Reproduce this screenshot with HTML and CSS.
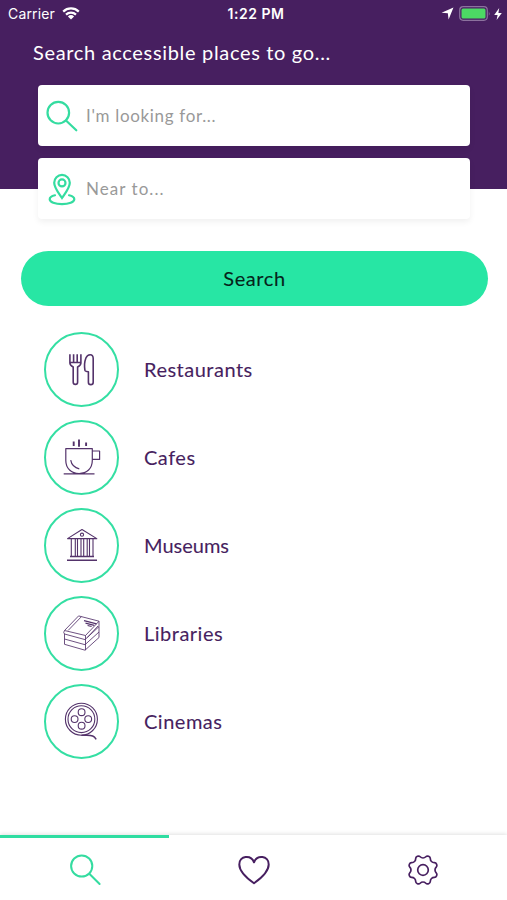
FILE: index.html
```html
<!DOCTYPE html>
<html lang="en">
<head>
    <meta charset="UTF-8">
    <meta name="viewport" content="width=device-width, initial-scale=1.0">
    <title>Accessible places</title>
    <link rel="stylesheet" href="styles.css">
</head>
<body>
    <div class="app">
        <header class="header">
            <div class="status-bar">
                <div class="status-left">
                    <span class="carrier">Carrier</span>
                    <svg width="18" height="13" viewBox="0 0 18 13">
                        <path d="M1.2 4.6a11.2 11.2 0 0 1 15.6 0M4 7.6a7.2 7.2 0 0 1 10 0" fill="none" stroke="#fff" stroke-width="2.2"/>
                        <path d="M9 12.6L5.9 9.5a4.5 4.5 0 0 1 6.2 0z" fill="#fff"/>
                    </svg>
                </div>
                <span class="time">1:22 PM</span>
                <div class="status-right">
                    <svg width="13" height="13" viewBox="0 0 12 12"><path d="M11.5 0.5L7 11.5L6.3 5.8L0.5 5.2z" fill="#fff"/></svg>
                    <svg width="32" height="15" viewBox="0 0 32 15">
                        <rect x="0.7" y="0.7" width="27.6" height="13.6" rx="3.5" fill="none" stroke="#8c729e" stroke-width="1.2"/>
                        <rect x="2.5" y="2.5" width="24" height="10" rx="1.5" fill="#4cd964"/>
                        <path d="M29.8 5.2q1.6 2.3 0 4.6z" fill="#8c729e"/>
                    </svg>
                    <svg width="8" height="12" viewBox="0 0 8 12"><path d="M5.2 0L0.2 7H3.6L2.6 12L7.8 4.9H4.4z" fill="#fff"/></svg>
                </div>
            </div>
            <h1 class="title">Search accessible places to go...</h1>
        </header>

        <form class="search-form">
            <label class="field">
                <svg class="field-icon" width="34" height="34" viewBox="0 0 34 34">
                    <circle cx="13.3" cy="13.7" r="10.8"/>
                    <path d="M21 21.5L31.3 31.3"/>
                </svg>
                <input type="text" placeholder="I'm looking for...">
            </label>
            <label class="field">
                <svg class="field-icon" width="34" height="34" viewBox="0 0 34 34">
                    <path d="M17 26C14.5 22 9.2 16 9.2 10.7a7.8 7.8 0 0 1 15.6 0C24.8 16 19.5 22 17 26z"/>
                    <circle cx="17" cy="10.9" r="3.5"/>
                    <path d="M10 23.3C6.5 24.1 4.7 25.5 4.7 27.2c0 2.9 5.5 4.9 12.3 4.9s12.3-2 12.3-4.9c0-1.7-1.8-3.1-5.3-3.9"/>
                </svg>
                <input class="near" type="text" placeholder="Near to...">
            </label>
            <button class="search-button" type="button">Search</button>
        </form>

        <ul class="categories">
            <li class="category">
                <span class="circle">
                    <svg viewBox="2 2 71 71" stroke-width="1.6">
                        <path d="M25.9 22.3V31q0 2.3 3.3 4V50.2a2.2 2.2 0 0 0 4.4 0V35q3.3-1.7 3.3-4V22.3M29.6 22.3v8.2M33.2 22.3v8.2M26 30.5h10.8"/>
                        <path d="M49.2 50.2V26.5c0-5-5.5-5-7.3-.5-1.4 3.6-1.5 9-1 12.2q.3 1.5 3.5 1.5V50.2a2.4 2.4 0 0 0 4.8 0z"/>
                    </svg>
                </span>
                <span class="name">Restaurants</span>
            </li>
            <li class="category">
                <span class="circle">
                    <svg viewBox="2 2 71 71" stroke-width="1.2">
                        <path d="M21.8 28.6H48.3V40.5c0 8-5.5 13-13.2 13s-13.3-5-13.3-13zM48.3 31h7.3v8.4h-7.3M19.7 53.9h30.8M26.7 40.2q1.3 7.1 8.6 8.6"/>
                        <path d="M29.7 21.5V26M35 19.5v7.3M42.1 22.5V26" stroke-width="1.9"/>
                    </svg>
                </span>
                <span class="name">Cafes</span>
            </li>
            <li class="category">
                <span class="circle">
                    <svg viewBox="2 2 71 71" stroke-width="1.1">
                        <path d="M23.5 30.6L38 21.5l14.8 9.1zM27.3 31v17.2M31.3 31v17.2M33.5 31v17.2M37 31v17.2M39.7 31v17.2M43.2 31v17.2M45.5 31v17.2M49 31v17.2"/>
                        <path d="M26 48.5h24M23 52.3h30" stroke-width="1.6"/>
                        <circle cx="38" cy="26.7" r="1.6"/>
                    </svg>
                </span>
                <span class="name museums">Museums</span>
            </li>
            <li class="category">
                <span class="circle">
                    <svg viewBox="2 2 71 71" stroke-width="0.85">
                        <path d="M20.5 34.5L34.6 19.9 55 25.2 41.5 39.5zM24.2 34.4L37.4 20.7M20.5 34.5q-1.5 2 0 3.5L41 43.6 55 30.6v-5.4M41.5 39.5V54.2M20.5 38v5L41 48.7 55 36v-5.4M20.5 43v5.3L41 54.2 55 41.5V36M43.2 41.6L54 30"/>
                        <path d="M40 24.7l12.6 3.1M41.5 27.1l8.8 2.2M43.6 29.5l4 1" stroke-width="1.2"/>
                    </svg>
                </span>
                <span class="name">Libraries</span>
            </li>
            <li class="category">
                <span class="circle">
                    <svg viewBox="2 2 71 71" stroke-width="1.1">
                        <circle cx="37.4" cy="35.2" r="16"/>
                        <circle cx="37.4" cy="35.2" r="13.4"/>
                        <circle cx="37.6" cy="28.2" r="3.4"/>
                        <circle cx="37.6" cy="41.7" r="3.4"/>
                        <circle cx="30.6" cy="35.1" r="3.4"/>
                        <circle cx="44.2" cy="35.1" r="3.4"/>
                        <path d="M37.4 51.2c5 .3 8.5-.4 11.3.8 1.8.8 2.5 1.8 3.5 3.3" stroke-width="1.5"/>
                    </svg>
                </span>
                <span class="name">Cinemas</span>
            </li>
        </ul>

        <nav class="tab-bar">
            <a class="tab active">
                <svg width="34" height="34" viewBox="0 0 34 34">
                    <circle cx="13.7" cy="13" r="10.6"/>
                    <path d="M21.3 20.7L31.6 31"/>
                </svg>
            </a>
            <a class="tab">
                <svg width="34" height="34" viewBox="0 0 34 34">
                    <path d="M17 30.3C10 25.3 2.3 18.7 2.3 11.5 2.3 2.5 14 1.5 17 9.3 20 1.5 31.7 2.5 31.7 11.5 31.7 18.7 24 25.3 17 30.3z"/>
                </svg>
            </a>
            <a class="tab settings">
                <svg width="34" height="34" viewBox="-17 -17 34 34">
                    <path d="M0-12C3.5-12 2.43-15.01 5.66-13.67 8.89-12.33 6.01-10.97 8.49-8.49 10.97-6.01 12.33-8.89 13.67-5.66 15.01-2.43 12-3.5 12 0 12 3.5 15.01 2.43 13.67 5.66 12.33 8.89 10.97 6.01 8.49 8.49 6.01 10.97 8.89 12.33 5.66 13.67 2.43 15.01 3.5 12 0 12-3.5 12-2.43 15.01-5.66 13.67-8.89 12.33-6.01 10.97-8.49 8.49-10.97 6.01-12.33 8.89-13.67 5.66-15.01 2.43-12 3.5-12 0-12-3.5-15.01-2.43-13.67-5.66-12.33-8.89-10.97-6.01-8.49-8.49-6.01-10.97-8.89-12.33-5.66-13.67-2.43-15.01-3.5-12 0-12z"/>
                    <circle cx="0" cy="0" r="5.3"/>
                </svg>
            </a>
        </nav>
    </div>
</body>
</html>
```
FILE: styles.css
```css
* {
    box-sizing: border-box;
}
body {
    margin: 0;
    font-family: Lato, "Liberation Sans", sans-serif;
    background-color: #fff;
    color: #471f60;
}
.app {
    display: flex;
    flex-direction: column;
    height: 900px;
    overflow: hidden;
}
.header {
    height: 189px;
    flex-shrink: 0;
    background-color: #471f60;
    color: #fff;
}
.status-bar {
    display: grid;
    grid-template-columns: 1fr auto 1fr;
    align-items: center;
    height: 27px;
    padding: 0 5px 0 8px;
    font-family: Inter, sans-serif;
    font-size: 14px;
}
.status-left,
.status-right {
    display: flex;
    align-items: center;
}
.status-left {
    gap: 7px;
}
.status-right {
    justify-content: flex-end;
    gap: 5px;
}
.status-right svg:last-child {
    margin-left: -2px;
}
.carrier {
    letter-spacing: 0.15px;
}
.time {
    font-weight: 600;
    letter-spacing: 0.5px;
    padding-left: 2px;
}
.title {
    margin: 10px 0 0 33px;
    font-size: 20px;
    line-height: 30px;
    font-weight: 400;
    letter-spacing: 0.67px;
}
.search-form {
    display: flex;
    flex-direction: column;
    gap: 12px;
    margin-top: -104px;
    padding: 0 19px 0 20px;
}
.field {
    display: flex;
    align-items: center;
    gap: 7px;
    height: 61px;
    margin: 0 18px;
    padding-left: 7px;
    background-color: #fff;
    border-radius: 4px;
    box-shadow: 0 3px 6px rgba(0, 0, 0, 0.06);
}
.field-icon {
    fill: none;
    stroke: #34dca0;
    stroke-width: 2.2;
    stroke-linecap: round;
}
.field input {
    flex: 1;
    min-width: 0;
    padding: 0;
    border: 0;
    outline: 0;
    background: none;
    font: inherit;
    font-size: 17px;
    letter-spacing: 0.67px;
}
.field .near {
    letter-spacing: 1.05px;
}
.field input::placeholder {
    color: #999;
    opacity: 1;
}
.search-button {
    height: 55px;
    margin: 20px 0 0 1px;
    padding-bottom: 3px;
    border: 0;
    border-radius: 28px;
    background-color: #27e6a4;
    color: #06231a;
    font: inherit;
    font-size: 20px;
    letter-spacing: 0.6px;
    -webkit-text-stroke: 0.1px;
}
.categories {
    display: flex;
    flex-direction: column;
    gap: 13px;
    margin: 26px 0 0;
    padding: 0 0 0 44px;
    list-style: none;
}
.category {
    display: flex;
    align-items: center;
    gap: 25px;
    height: 75px;
}
.circle {
    width: 75px;
    height: 75px;
    border: 2px solid #34dfa3;
    border-radius: 50%;
}
.circle svg {
    display: block;
    fill: none;
    stroke: #54336b;
    stroke-linejoin: round;
}
.name {
    padding-bottom: 1px;
    font-size: 20px;
    letter-spacing: 0.5px;
    -webkit-text-stroke: 0.1px;
}
.museums {
    letter-spacing: 0;
}
.tab-bar {
    display: flex;
    height: 65px;
    margin-top: auto;
    box-shadow: 0 -1px 4px rgba(0, 0, 0, 0.12);
}
.tab {
    display: flex;
    flex: 1;
    align-items: center;
    justify-content: center;
    padding-top: 5px;
    background-color: #fff;
}
.tab svg {
    fill: none;
    stroke: #471f60;
    stroke-width: 2;
    stroke-linejoin: round;
}
.settings svg {
    stroke-width: 1.7;
}
.tab.active {
    padding-top: 2px;
    border-top: 3px solid #2fdda1;
}
.tab.active svg {
    stroke: #34dca0;
    stroke-linecap: round;
}
```
